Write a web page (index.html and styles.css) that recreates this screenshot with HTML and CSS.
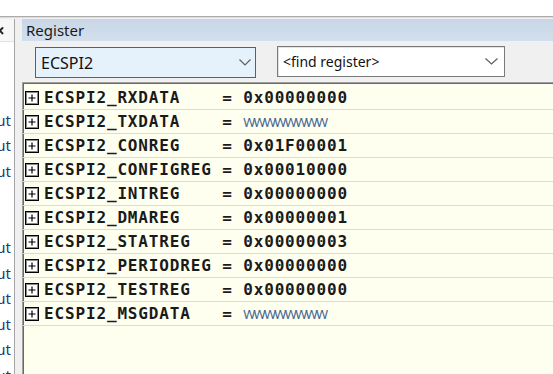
FILE: index.html
```html
<!DOCTYPE html>
<html lang="en">

<head>
    <meta charset="UTF-8">
    <meta name="viewport" content="width=device-width, initial-scale=1.0">
    <title>Register</title>
    <link rel="stylesheet" href="styles.css">
</head>

<body>
    <div class="topstrip"></div>

    <div class="panes">
        <aside class="side">
            <div class="side__head"><span class="side__close">&times;</span></div>
            <ul class="side__list">
                <li class="side__item"><span>Input</span></li>
                <li class="side__item"><span>Output</span></li>
                <li class="side__item"><span>Input</span></li>
                <li class="side__item"></li>
                <li class="side__item"></li>
                <li class="side__item"><span>Output</span></li>
                <li class="side__item"><span>Input</span></li>
                <li class="side__item"><span>Output</span></li>
                <li class="side__item"><span>Input</span></li>
                <li class="side__item"><span>Output</span></li>
                <li class="side__item"><span>Input</span></li>
            </ul>
        </aside>

        <div class="splitter"></div>

        <section class="register">
            <div class="register__head">Register</div>

            <div class="toolbar">
                <div class="combo combo--active">
                    <span class="combo__text">ECSPI2</span>
                    <svg class="combo__arrow" width="12" height="7" viewBox="0 0 12 7">
                        <path d="M0.5 0.5 L6 6 L11.5 0.5" fill="none" stroke="#5f5f5f" stroke-width="1.2" />
                    </svg>
                </div>
                <div class="combo combo--find">
                    <span class="combo__text">&lt;find register&gt;</span>
                    <svg class="combo__arrow" width="13" height="7" viewBox="0 0 13 7">
                        <path d="M0.5 0.5 L6.5 6 L12.5 0.5" fill="none" stroke="#5f5f5f" stroke-width="1.2" />
                    </svg>
                </div>
            </div>

            <div class="reg-list">
                <div class="reg-row"><svg class="expander" width="14" height="14" viewBox="0 0 14 14"><rect x="0.5" y="0.5" width="13" height="13" fill="#fff" stroke="#000" /><rect x="1.5" y="1.5" width="11" height="11" fill="none" stroke="#8a8a8a" /><path d="M3.5 7 H10.5 M7 3.5 V10.5" stroke="#000" stroke-width="1.2" /></svg><span class="reg-name">ECSPI2_RXDATA    = </span><span class="reg-value">0x00000000</span></div>
                <div class="reg-row"><svg class="expander" width="14" height="14" viewBox="0 0 14 14"><rect x="0.5" y="0.5" width="13" height="13" fill="#fff" stroke="#000" /><rect x="1.5" y="1.5" width="11" height="11" fill="none" stroke="#8a8a8a" /><path d="M3.5 7 H10.5 M7 3.5 V10.5" stroke="#000" stroke-width="1.2" /></svg><span class="reg-name">ECSPI2_TXDATA    = </span><span class="reg-value reg-value--wo">WWWWWWWW</span></div>
                <div class="reg-row"><svg class="expander" width="14" height="14" viewBox="0 0 14 14"><rect x="0.5" y="0.5" width="13" height="13" fill="#fff" stroke="#000" /><rect x="1.5" y="1.5" width="11" height="11" fill="none" stroke="#8a8a8a" /><path d="M3.5 7 H10.5 M7 3.5 V10.5" stroke="#000" stroke-width="1.2" /></svg><span class="reg-name">ECSPI2_CONREG    = </span><span class="reg-value">0x01F00001</span></div>
                <div class="reg-row"><svg class="expander" width="14" height="14" viewBox="0 0 14 14"><rect x="0.5" y="0.5" width="13" height="13" fill="#fff" stroke="#000" /><rect x="1.5" y="1.5" width="11" height="11" fill="none" stroke="#8a8a8a" /><path d="M3.5 7 H10.5 M7 3.5 V10.5" stroke="#000" stroke-width="1.2" /></svg><span class="reg-name">ECSPI2_CONFIGREG = </span><span class="reg-value">0x00010000</span></div>
                <div class="reg-row"><svg class="expander" width="14" height="14" viewBox="0 0 14 14"><rect x="0.5" y="0.5" width="13" height="13" fill="#fff" stroke="#000" /><rect x="1.5" y="1.5" width="11" height="11" fill="none" stroke="#8a8a8a" /><path d="M3.5 7 H10.5 M7 3.5 V10.5" stroke="#000" stroke-width="1.2" /></svg><span class="reg-name">ECSPI2_INTREG    = </span><span class="reg-value">0x00000000</span></div>
                <div class="reg-row"><svg class="expander" width="14" height="14" viewBox="0 0 14 14"><rect x="0.5" y="0.5" width="13" height="13" fill="#fff" stroke="#000" /><rect x="1.5" y="1.5" width="11" height="11" fill="none" stroke="#8a8a8a" /><path d="M3.5 7 H10.5 M7 3.5 V10.5" stroke="#000" stroke-width="1.2" /></svg><span class="reg-name">ECSPI2_DMAREG    = </span><span class="reg-value">0x00000001</span></div>
                <div class="reg-row"><svg class="expander" width="14" height="14" viewBox="0 0 14 14"><rect x="0.5" y="0.5" width="13" height="13" fill="#fff" stroke="#000" /><rect x="1.5" y="1.5" width="11" height="11" fill="none" stroke="#8a8a8a" /><path d="M3.5 7 H10.5 M7 3.5 V10.5" stroke="#000" stroke-width="1.2" /></svg><span class="reg-name">ECSPI2_STATREG   = </span><span class="reg-value">0x00000003</span></div>
                <div class="reg-row"><svg class="expander" width="14" height="14" viewBox="0 0 14 14"><rect x="0.5" y="0.5" width="13" height="13" fill="#fff" stroke="#000" /><rect x="1.5" y="1.5" width="11" height="11" fill="none" stroke="#8a8a8a" /><path d="M3.5 7 H10.5 M7 3.5 V10.5" stroke="#000" stroke-width="1.2" /></svg><span class="reg-name">ECSPI2_PERIODREG = </span><span class="reg-value">0x00000000</span></div>
                <div class="reg-row"><svg class="expander" width="14" height="14" viewBox="0 0 14 14"><rect x="0.5" y="0.5" width="13" height="13" fill="#fff" stroke="#000" /><rect x="1.5" y="1.5" width="11" height="11" fill="none" stroke="#8a8a8a" /><path d="M3.5 7 H10.5 M7 3.5 V10.5" stroke="#000" stroke-width="1.2" /></svg><span class="reg-name">ECSPI2_TESTREG   = </span><span class="reg-value">0x00000000</span></div>
                <div class="reg-row"><svg class="expander" width="14" height="14" viewBox="0 0 14 14"><rect x="0.5" y="0.5" width="13" height="13" fill="#fff" stroke="#000" /><rect x="1.5" y="1.5" width="11" height="11" fill="none" stroke="#8a8a8a" /><path d="M3.5 7 H10.5 M7 3.5 V10.5" stroke="#000" stroke-width="1.2" /></svg><span class="reg-name">ECSPI2_MSGDATA   = </span><span class="reg-value reg-value--wo">WWWWWWWW</span></div>
            </div>
        </section>
    </div>
</body>

</html>
```

FILE: styles.css
```css
:root {
    --ff-ui: 'Noto Sans', 'Open Sans', sans-serif;
    --ff-mono: 'DejaVu Sans Mono', 'Liberation Mono', monospace;
    --clr-panel: #f0f0f0;
    --clr-cream: #fffff0;
    --clr-text: #1a1a1a;
}

* {
    margin: 0;
    padding: 0;
    box-sizing: border-box;
}

html,
body {
    width: 553px;
    height: 374px;
    overflow: hidden;
}

body {
    background: #fff;
    color: var(--clr-text);
    font-family: var(--ff-ui);
    font-size: 15px;
    display: flex;
    flex-direction: column;
}

.topstrip {
    height: 17px;
    background: #fff;
    border-bottom: 1px solid #ababab;
}

.panes {
    flex: 1;
    display: flex;
    min-height: 0;
    border-top: 1px solid #dcdcdc;
    padding-top: 1px;
    background: var(--clr-panel);
}

/* left tool window, mostly scrolled out of view */
.side {
    width: 15px;
    background: #fff;
    border-right: 1px solid #a6a6a6;
    overflow: hidden;
}

.side__head {
    height: 23px;
    background: #f7f7f7;
    border-bottom: 1px solid #e3e3e3;
    display: flex;
    align-items: center;
    overflow: hidden;
}

.side__close {
    margin-left: -5px;
    font-size: 17px;
    font-weight: 700;
    line-height: 1;
    color: #222;
}

.side__list {
    list-style: none;
    padding-top: 65px;
}

.side__item {
    height: 25.5px;
    display: flex;
    align-items: center;
    justify-content: flex-end;
    padding-right: 3px;
    overflow: hidden;
    color: #233c74;
    white-space: nowrap;
}

.splitter {
    width: 7px;
    background: var(--clr-panel);
}

.register {
    flex: 1;
    display: flex;
    flex-direction: column;
    min-width: 0;
}

.register__head {
    height: 22px;
    line-height: 22px;
    padding-left: 4px;
    background: linear-gradient(#c8d6e7, #d3dfec);
    font-size: 15px;
}

.toolbar {
    height: 41px;
    display: flex;
    align-items: flex-start;
    gap: 21px;
    padding: 5px 0 0 13px;
}

.combo {
    height: 31px;
    display: flex;
    align-items: center;
    justify-content: space-between;
    padding: 0 5px 0 5px;
    background: #fff;
}

.combo--active {
    width: 221px;
    margin-top: 1px;
    border: 1px solid #0078d7;
    background: #e5f1fb;
    font-size: 16px;
    padding-right: 4px;
}

.combo--find {
    width: 228px;
    border: 1px solid #7a7a7a;
    box-shadow: inset 1px 1px 0 #e3e3e3;
    font-size: 14px;
    padding-right: 6px;
}

.combo__text {
    color: #111;
}

.reg-list {
    flex: 1;
    background: var(--clr-cream);
    border-top: 1px solid #a0a0a0;
    border-left: 1px solid #a0a0a0;
    box-shadow: inset 1px 1px 0 #696969;
    padding-top: 3px;
    overflow: hidden;
}

.reg-row {
    height: 24px;
    display: flex;
    align-items: center;
    padding-left: 2px;
    border-bottom: 1px solid #dcdcd0;
    font-family: var(--ff-mono);
    font-size: 16px;
    font-weight: 700;
    letter-spacing: 0.85px;
    white-space: pre;
}

.expander {
    flex: none;
    margin-right: 5px;
}

.reg-value--wo {
    font-family: var(--ff-ui);
    font-size: 13px;
    font-weight: 400;
    letter-spacing: -1.7px;
    color: #46658f;
}
```
